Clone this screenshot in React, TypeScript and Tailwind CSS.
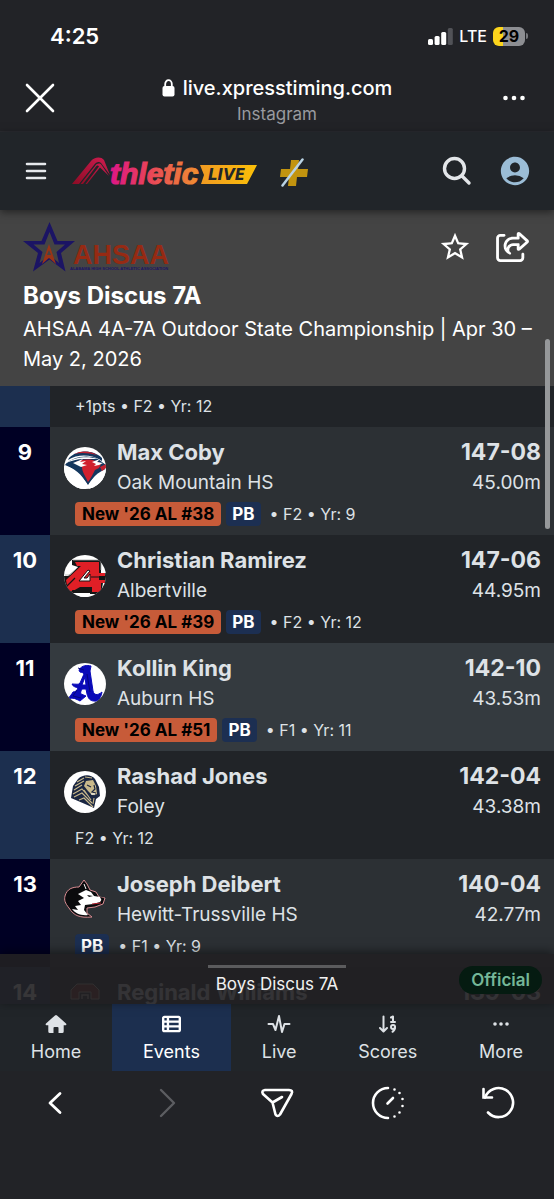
import type { ReactNode } from 'react'
import { FaRegShareFromSquare, FaTableList } from 'react-icons/fa6'
import { MdAccountCircle, MdStarBorder } from 'react-icons/md'

type Result = {
  place: number
  name: string
  school: string
  mark: string
  metric: string
  rank?: string
  pb?: boolean
  meta: string
  logo: ReactNode
  rowClass: string
  placeClass: string
}

function OakMountainLogo() {
  return (
    <svg viewBox="0 0 42 42" className="h-[42px] w-[42px] shrink-0 rounded-full bg-white">
      <path d="M5 11C13 3 28 2 38 11L38 14C27 7 14 7 4 13Z" fill="#14375e" />
      <path d="M10 7C18 3 27 4 33 8C26 6 17 5 10 7Z" fill="#c4202f" />
      <path d="M1 18C7 10 24 7 34 12L42 18L40 25C34 27 29 31 24 38C19 31 12 22 1 18Z" fill="#14375e" />
      <path d="M2 16C10 10 24 9 34 12L20 12C13 12 7 14 2 16Z" fill="#fff" />
      <path d="M12 15C20 11 32 12 37 17L35 21L31 23C29 27 27 31 24 35C22 30 18 25 18 20Z" fill="#d0202e" />
      <path d="M9 16L19 12L16 15L22 14L18 17L23 18L17 20Z" fill="#fff" />
      <path d="M28 15L36 12L33 15L39 16L35 18L30 19L32 17Z" fill="#fff" />
      <path d="M0 19C10 20 18 28 23 37L22 42H0Z" fill="#fff" />
      <path d="M42 22C34 25 29 30 25 37L25 42H42Z" fill="#fff" />
      <path d="M36 20L42 17V21L38 24Z" fill="#c4202f" />
    </svg>
  )
}

function AlbertvilleLogo() {
  return (
    <svg viewBox="0 0 42 42" className="h-[42px] w-[42px] shrink-0 rounded-full bg-white">
      <path d="M8 5H37V18H42V28H39L37 39H26V35H14V38H5L0 28V21H4L14 12L8 10Z" fill="#151515" />
      <path d="M11 7H35V18H41V21H35V25H41V28H37V37H28V32H16L9 36H4L2 25L17 11H13Z" fill="#e01f26" />
      <path d="M24 15L15 26H26V19L23 23H20L26 16Z" fill="#fff" stroke="#151515" strokeWidth="1" />
      <path d="M27 22H37M3 31L11 23" stroke="#151515" strokeWidth="1.2" />
      <path d="M9 5H37V15M1 20L6 20L14 12" fill="none" stroke="#aaa" strokeWidth="0.8" />
      <path d="M8 35H26V38H9Z" fill="#151515" />
      <path d="M14 39H27L24 42H16Z" fill="#fff" />
    </svg>
  )
}

function AuburnLogo() {
  return (
    <svg viewBox="0 0 42 42" className="h-[42px] w-[42px] shrink-0 rounded-full bg-white">
      <path
        d="M15 7C18 2 23 2 27 3L26 8L29 28C30 32 33 33 38 29C37 35 34 39 30 38C26 38 24 35 23 31L22 26H18C17 28 16 30 17 31L22 33L16 38C12 36 9 34 4 36C6 33 8 31 9 29C12 29 13 27 14 25C12 24 9 24 8 21C12 21 15 22 16 20L20 11C18 8 16 11 15 7ZM21 14L18 22H22Z"
        fill="#0a0ab8"
        stroke="#0a0ab8"
        strokeWidth="1"
      />
      <path d="M14 5L20 7M13 27L9 33L17 35M23 11L26 29" fill="none" stroke="#06067c" strokeWidth="1" />
    </svg>
  )
}

function FoleyLogo() {
  return (
    <svg viewBox="0 0 42 42" className="h-[42px] w-[42px] shrink-0 rounded-full bg-white">
      <path d="M14 8C19 3 27 3 31 8L35 16L36 25L32 28L30 37L21 33L7 27L9 15Z" fill="#1b2742" />
      <path d="M22 10L29 9L32 15L33 23L29 25L24 20L20 15Z" fill="#c9b98b" />
      <path
        d="M13 11L20 7M11 15L20 10M10 19L18 14M9 23L18 18L25 26M10 26L18 22L28 32M15 29L20 27L29 36M21 6L28 7M20 19L27 29M30 27L29 33"
        fill="none"
        stroke="#c9b98b"
        strokeWidth="1.1"
      />
      <path d="M23 14L27 16M30 14L31 18L28 21L32 22M26 25L32 24" fill="none" stroke="#1b2742" strokeWidth="1.2" />
      <path d="M27 23H31" stroke="#fff" strokeWidth="1" />
    </svg>
  )
}

function HewittLogo() {
  return (
    <svg viewBox="0 0 42 42" className="h-[42px] w-[42px] shrink-0">
      <path
        d="M1 17C3 10 8 8 15 8L20 1L23 5L26 11L32 13L35 18L41 19L39 25L31 28L23 29L23 34L28 38C16 39 10 37 5 29C1 24 0 21 1 17Z"
        fill="#0b0b0d"
        stroke="#d98c92"
        strokeWidth="1"
      />
      <path
        d="M14 15L22 11L27 13L30 17L36 18L38 20L36 23L29 25L21 26L20 31L24 36C17 37 11 34 8 30L14 31L11 27L17 26L14 22L20 19Z"
        fill="#fff"
      />
      <path d="M23 16L29 17L25 18Z" fill="#0b0b0d" />
      <path d="M36 18L40 19L38 22Z" fill="#0b0b0d" />
      <path d="M20 5L22 10" stroke="#fff" strokeWidth="1" />
      <path d="M28 25L37 24" stroke="#b3202d" strokeWidth="1" />
    </svg>
  )
}

function WilliamsLogo() {
  return (
    <svg viewBox="0 0 42 42" className="h-[42px] w-[42px] shrink-0">
      <path d="M7 22V13L13 7H29L35 13V22H27V15H15V22Z" fill="#7a2420" stroke="#b9a9a4" strokeWidth="1" />
      <path d="M18 22V18H24V22" fill="none" stroke="#b9a9a4" strokeWidth="1.5" />
    </svg>
  )
}

const light = 'bg-[#2c3034]'
const dark = 'bg-[#212428]'
const navy = 'bg-[#000024]'
const blue = 'bg-[#1c2f4f]'

const results: Result[] = [
  { place: 9, name: 'Max Coby', school: 'Oak Mountain HS', mark: '147-08', metric: '45.00m', rank: "New '26 AL #38", pb: true, meta: 'F2 • Yr: 9', logo: <OakMountainLogo />, rowClass: light, placeClass: navy },
  { place: 10, name: 'Christian Ramirez', school: 'Albertville', mark: '147-06', metric: '44.95m', rank: "New '26 AL #39", pb: true, meta: 'F2 • Yr: 12', logo: <AlbertvilleLogo />, rowClass: dark, placeClass: blue },
  { place: 11, name: 'Kollin King', school: 'Auburn HS', mark: '142-10', metric: '43.53m', rank: "New '26 AL #51", pb: true, meta: 'F1 • Yr: 11', logo: <AuburnLogo />, rowClass: 'bg-[#343a3f]', placeClass: navy },
  { place: 12, name: 'Rashad Jones', school: 'Foley', mark: '142-04', metric: '43.38m', meta: 'F2 • Yr: 12', logo: <FoleyLogo />, rowClass: dark, placeClass: blue },
  { place: 13, name: 'Joseph Deibert', school: 'Hewitt-Trussville HS', mark: '140-04', metric: '42.77m', pb: true, meta: 'F1 • Yr: 9', logo: <HewittLogo />, rowClass: light, placeClass: navy },
]

function StatusBar() {
  return (
    <div className="flex h-[66px] items-center justify-between pt-1.5 pr-[26px] pl-[50px]">
      <span className="text-[22px] font-semibold text-white">4:25</span>
      <div className="flex items-center gap-1.5">
        <svg viewBox="0 0 25 17" className="h-[17px] w-[25px]">
          <rect x="0" y="11" width="5" height="6" rx="1.5" fill="#fff" />
          <rect x="6.6" y="8" width="5" height="9" rx="1.5" fill="#fff" />
          <rect x="13.2" y="4" width="5" height="13" rx="1.5" fill="#fff" />
          <rect x="19.8" y="0" width="5" height="17" rx="1.5" fill="#515257" />
        </svg>
        <span className="text-base font-medium text-white">LTE</span>
        <div className="flex items-center gap-px">
          <div className="flex h-[19px] w-8 items-center justify-center rounded-md bg-linear-to-r from-[#fcd51c] from-30% to-[#8d8e92] to-30% text-base font-bold text-black">
            29
          </div>
          <span className="h-1.5 w-0.5 rounded-r-sm bg-[#77787c]" />
        </div>
      </div>
    </div>
  )
}

function BrowserBar() {
  return (
    <div className="flex h-[66px] items-center justify-between border-b border-[#2b2c31] px-6 text-white">
      <button aria-label="Close">
        <svg viewBox="0 0 32 32" className="h-8 w-8" fill="none" stroke="currentColor" strokeWidth="2.6" strokeLinecap="round">
          <path d="M3 2L29 28M29 2L3 28" />
        </svg>
      </button>
      <div className="flex flex-col items-center pt-0.5">
        <div className="flex items-center gap-2">
          <svg viewBox="0 0 13 18" className="h-[18px] w-[13px]">
            <rect x="0.5" y="7" width="12" height="10.5" rx="2" fill="#fff" />
            <path d="M3.2 8V5A3.3 3.8 0 0 1 9.8 5V8" fill="none" stroke="#fff" strokeWidth="1.8" />
          </svg>
          <span className="text-xl leading-7 font-medium">live.xpresstiming.com</span>
        </div>
        <span className="text-[17px] leading-6 text-[#999a9f]">Instagram</span>
      </div>
      <button aria-label="More options">
        <svg viewBox="0 0 32 32" className="h-8 w-8" fill="currentColor">
          <circle cx="7.5" cy="15" r="2.3" />
          <circle cx="16" cy="15" r="2.3" />
          <circle cx="24.5" cy="15" r="2.3" />
        </svg>
      </button>
    </div>
  )
}

function AthleticLogo() {
  return (
    <svg viewBox="0 -1 188 32" className="h-8 w-[188px]">
      <defs>
        <linearGradient id="word" gradientUnits="userSpaceOnUse" x1="38" y1="0" x2="130" y2="0">
          <stop offset="0" stopColor="#dd1686" />
          <stop offset="0.4" stopColor="#e8405c" />
          <stop offset="1" stopColor="#f0952d" />
        </linearGradient>
        <linearGradient id="peak" x1="0" y1="1" x2="1" y2="0">
          <stop offset="0" stopColor="#8d0c25" />
          <stop offset="1" stopColor="#d01c50" />
        </linearGradient>
        <linearGradient id="banner" x1="0" y1="0" x2="1" y2="0">
          <stop offset="0" stopColor="#f09a22" />
          <stop offset="1" stopColor="#fbc008" />
        </linearGradient>
      </defs>
      <path d="M0 28L19 5C22 1 29 0 32 4L38 19L29 7C27 5 24 6 22 9L7 28Z" fill="url(#peak)" />
      <path d="M8.500 28L23 10C25 7 28 7 29.500 9L37 20L28 11.500L15 28H13.500L27 10.500C26 9 25 9 24 10.500L11 28Z" fill="url(#peak)" />
      <text x="38" y="28" fill="url(#word)" stroke="url(#word)" strokeWidth="1.2" className="font-['Liberation_Sans'] text-[30px] font-bold italic">
        thletic
      </text>
      <path d="M128 9H185L175 28H129L132 19Z" fill="url(#banner)" />
      <text x="136" y="24" fill="#212529" className="font-['DejaVu_Sans'] text-[15px] font-bold italic">
        LIVE
      </text>
    </svg>
  )
}

function AppHeader() {
  return (
    <header className="relative z-10 flex h-[78px] items-center bg-[#212529] px-6 shadow-[0_2px_8px_rgba(0,0,0,0.5)]">
      <button aria-label="Menu" className="mr-6">
        <svg viewBox="0 0 24 24" className="h-6 w-6" fill="none" stroke="#e6e9ec" strokeWidth="2.6" strokeLinecap="round">
          <path d="M3 5H21M3 12H21M3 19H21" />
        </svg>
      </button>
      <a href="#home" aria-label="AthleticLIVE">
        <AthleticLogo />
      </a>
      <a href="#plus" aria-label="Plus" className="ml-5">
        <svg viewBox="0 0 28 32" className="h-8 w-7">
          <path d="M11 5H19L18 14H28L27 22H17L16 31H8L9 22H0L1 14H10Z" fill="#c2940f" />
          <path d="M2.5 30.500L22.500 4.500" stroke="#b9d3e4" strokeWidth="2.5" strokeLinecap="round" />
        </svg>
      </a>
      <button aria-label="Search" className="ml-auto">
        <svg viewBox="0 0 30 30" className="h-[30px] w-[30px]" fill="none" stroke="#e3e6e9" strokeWidth="3.4" strokeLinecap="round">
          <circle cx="12.500" cy="12.500" r="10" />
          <path d="M20 20L27 27" />
        </svg>
      </button>
      <button aria-label="Account" className="-mr-0.5 ml-[26px]">
        <MdAccountCircle className="h-[34px] w-[34px] text-[#9bbdd6]" />
      </button>
    </header>
  )
}

function AhsaaLogo() {
  return (
    <svg viewBox="0 0 148 50" className="h-[50px] w-[148px]">
      <path
        d="M26.500 0L34.500 19H52L38 31L42.500 49.500L26.500 37.500L10 49.500L15 31L0 19H18.500ZM26.500 10L21.500 22.500H10.500L19.500 30L16.500 41L26.500 33L36 41L33.500 30L42 22.500H31.500Z"
        fill="#1b1464"
      />
      <path d="M26 22L33 42L26 36L19 42Z" fill="#9a3416" />
      <path d="M26 28L28 33H24Z" fill="#444" />
      <text x="50" y="42" fill="#962a13" className="font-['Liberation_Sans'] text-[27px] font-bold">
        AHSAA
      </text>
      <text x="47" y="48" fill="#1b1464" className="font-['Liberation_Sans'] text-[4px] font-bold">
        ALABAMA HIGH SCHOOL ATHLETIC ASSOCIATION
      </text>
    </svg>
  )
}

function EventHeader() {
  return (
    <section className="bg-[#444444] py-3 pr-3 pl-[23px] text-white">
      <div className="flex h-[58px] items-start justify-between pr-3">
        <AhsaaLogo />
        <div className="flex items-center gap-6 pt-2">
          <button aria-label="Favorite">
            <MdStarBorder className="h-[34px] w-[34px]" />
          </button>
          <button aria-label="Share">
            <FaRegShareFromSquare className="h-[30px] w-[34px]" />
          </button>
        </div>
      </div>
      <h1 className="mb-0.5 text-2xl leading-8 font-bold">Boys Discus 7A</h1>
      <p className="text-xl leading-[30px]">AHSAA 4A-7A Outdoor State Championship | Apr 30 – May 2, 2026</p>
    </section>
  )
}

function ResultRow({ result }: { result: Result }) {
  return (
    <li className={`flex h-[108px] ${result.rowClass}`}>
      <div className={`w-[50px] shrink-0 pt-2.5 text-center text-[22px] leading-[30px] font-bold text-white ${result.placeClass}`}>
        {result.place}
      </div>
      <div className="min-w-0 flex-1 pt-2.5 pr-[13px] pl-3.5">
        <div className="flex items-center gap-[11px]">
          {result.logo}
          <div className="min-w-0 flex-1">
            <div className="flex justify-between text-[22px] leading-[30px] font-bold">
              <a href="#athlete">{result.name}</a>
              <span className="text-[23px]">{result.mark}</span>
            </div>
            <div className="flex justify-between text-[19px] leading-8">
              <a href="#team">{result.school}</a>
              <span>{result.metric}</span>
            </div>
          </div>
        </div>
        <div className="flex items-center gap-[5px] pt-[3px] pl-[11px] text-base leading-6">
          {result.rank && <span className="rounded bg-[#c75b39] px-[7px] text-[17px] font-bold text-black">{result.rank}</span>}
          {result.pb && <span className="rounded bg-[#1c2f52] px-1.5 text-[17px] font-bold text-white">PB</span>}
          <span className={result.pb ? 'pl-1' : ''}>
            {result.pb && '• '}
            {result.meta}
          </span>
        </div>
      </div>
    </li>
  )
}

function Results() {
  return (
    <main className="relative text-[#dee2e6]">
      <ol>
        <li className={`flex ${dark}`}>
          <div className={`w-[50px] shrink-0 ${blue}`} />
          <p className="px-[25px] pt-2 pb-[9px] text-base leading-6">+1pts • F2 • Yr: 12</p>
        </li>
        {results.map((result) => (
          <ResultRow key={result.place} result={result} />
        ))}
        <li className={`flex h-[37px] overflow-hidden ${dark}`}>
          <div className={`w-[50px] shrink-0 pt-2.5 text-center text-[22px] leading-[30px] font-bold text-white ${blue}`}>14</div>
          <div className="flex flex-1 gap-[11px] pt-2.5 pr-[13px] pl-3.5 text-[22px] leading-[30px] font-bold">
            <WilliamsLogo />
            <a href="#athlete">Reginald Williams</a>
            <span className="ml-auto text-[23px]">139-03</span>
          </div>
        </li>
      </ol>

      {/* Pull-up event sheet */}
      <div className="absolute inset-x-0 bottom-0 h-[50px] bg-[#212022]/90 shadow-[0_-2px_10px_rgba(0,0,0,0.5)]">
        <div className="mx-auto mt-[11px] h-[3px] w-[138px] bg-[#5b5b5d]" />
        <p className="mt-1 text-center text-[17px] leading-6 text-[#f1f1f1]">Boys Discus 7A</p>
        <span className="absolute top-3 right-3 rounded-full bg-[#051b11] px-3 text-[17px] leading-7 font-semibold text-[#75b798]">
          Official
        </span>
      </div>
    </main>
  )
}

const tabs = [
  {
    label: 'Home',
    icon: (
      <svg viewBox="0 0 22 20" className="h-5 w-[22px]" fill="currentColor">
        <path d="M10 1.400Q11 0.500 12 1.400L21 9.500C22 10.500 21 11.500 20 11.300H18.700V17.500Q18.700 19 17.200 19H13.500V14Q13.500 13 12.500 13H9.500Q8.500 13 8.500 14V19H4.800Q3.300 19 3.300 17.500V11.300H2C1 11.500 0 10.500 1 9.500Z" />
      </svg>
    ),
  },
  { label: 'Events', active: true, icon: <FaTableList className="h-5 w-[19px]" /> },
  {
    label: 'Live',
    icon: (
      <svg viewBox="0 0 24 20" className="h-5 w-6" fill="none" stroke="currentColor" strokeWidth="2" strokeLinecap="round" strokeLinejoin="round">
        <path d="M1.500 10H6L8.500 16L12 2L15 18L17.500 10H22.500" />
      </svg>
    ),
  },
  {
    label: 'Scores',
    icon: (
      <svg viewBox="0 0 20 20" className="h-5 w-5" fill="none" stroke="currentColor" strokeWidth="2" strokeLinecap="round" strokeLinejoin="round">
        <path d="M5.500 2.500V17M2 14L5.500 17.500L9 14" />
        <path d="M13 3.500L15 2.500V8M13 8H17" />
        <circle cx="15" cy="13" r="2" />
        <path d="M17 13C17 15 16.500 16.500 14.500 17.800" />
      </svg>
    ),
  },
  {
    label: 'More',
    icon: (
      <svg viewBox="0 0 20 20" className="h-5 w-5" fill="currentColor">
        <circle cx="4" cy="10" r="1.8" />
        <circle cx="10" cy="10" r="1.8" />
        <circle cx="16" cy="10" r="1.8" />
      </svg>
    ),
  },
]

function TabBar() {
  return (
    <nav className="flex bg-[#212529] text-lg leading-6 text-[#dee2e6]">
      {tabs.map((tab) => (
        <a
          key={tab.label}
          href="#tab"
          className={`flex h-[67px] flex-auto flex-col items-center gap-1.5 pt-2.5 ${tab.active ? 'bg-[#1c2f4f] text-white' : ''}`}
        >
          {tab.icon}
          <span className="px-[30px]">{tab.label}</span>
        </a>
      ))}
    </nav>
  )
}

function BrowserToolbar() {
  const icon = 'h-9 w-9'
  return (
    <div className="grid grid-cols-5 justify-items-center pt-3.5 pb-[78px] text-white">
      <button aria-label="Back">
        <svg viewBox="0 0 36 36" className={icon} fill="none" stroke="currentColor" strokeWidth="2.8" strokeLinecap="round" strokeLinejoin="round">
          <path d="M23 8.500L13 18L23 27.500" />
        </svg>
      </button>
      <button aria-label="Forward" disabled>
        <svg viewBox="0 0 36 36" className={icon} fill="none" stroke="#5c5d61" strokeWidth="2.4" strokeLinecap="round" strokeLinejoin="round">
          <path d="M13 5L26 18L13 31" />
        </svg>
      </button>
      <button aria-label="Send">
        <svg viewBox="0 0 36 36" className={icon} fill="none" stroke="currentColor" strokeWidth="2.6" strokeLinecap="round" strokeLinejoin="round">
          <path d="M6 5H30Q34.500 5 32.500 9L21 29.500Q18.500 32.500 16.500 29.500L13.500 17.500L4 9Q2 5.500 6 5ZM13.500 17.500L23 12" />
        </svg>
      </button>
      <button aria-label="Reading history">
        <svg viewBox="0 0 36 36" className={icon} fill="none" stroke="currentColor" strokeWidth="2.6" strokeLinecap="round">
          <path d="M18 3A15 15 0 0 0 18 33M17.500 18.500L23 13" />
          <path d="M24.500 4.500V4.510M29.500 8V8.010M32.500 14V14.010M32.500 21V21.010M29.500 27.500V27.510M24.500 31.500V31.510" />
        </svg>
      </button>
      <button aria-label="Reload">
        <svg viewBox="0 0 36 36" className={icon} fill="none" stroke="currentColor" strokeWidth="2.6" strokeLinecap="round">
          <path d="M4 12.500A14.500 14.500 0 1 1 7 27.500" />
          <path d="M2.500 4V12.500H11" />
        </svg>
      </button>
    </div>
  )
}

export default function App() {
  return (
    <div className="min-h-screen bg-[#222327] font-['Inter',sans-serif]">
      <StatusBar />
      <BrowserBar />
      <div className="relative">
        <AppHeader />
        <EventHeader />
        <Results />
        {/* Scroll thumb */}
        <div className="absolute top-[207px] right-1 z-10 h-[190px] w-[5px] rounded-full bg-[#96989a]" />
      </div>
      <TabBar />
      <BrowserToolbar />
    </div>
  )
}
